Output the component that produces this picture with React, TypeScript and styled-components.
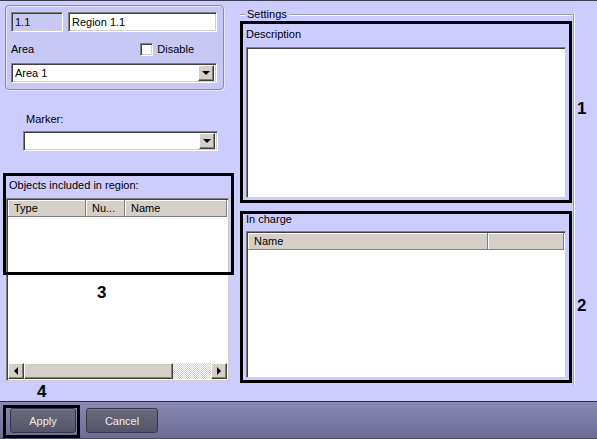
import styled, { createGlobalStyle } from "styled-components";

const GlobalStyle = createGlobalStyle`
  html, body {
    margin: 0;
    padding: 0;
    background: #ccccff;
  }
  * {
    box-sizing: border-box;
  }
`;

type Column = { title: string; width?: number };

const ListView = ({
  columns,
  scroll,
  className,
}: {
  columns: Column[];
  scroll?: boolean;
  className?: string;
}) => (
  <ListFrame className={className}>
    <HeaderRow>
      {columns.map((c) => (
        <HeaderCell key={c.title} $width={c.width}>
          {c.title}
        </HeaderCell>
      ))}
    </HeaderRow>
    <ListBody />
    {scroll && (
      <ScrollBar>
        <ScrollButton>
          <Arrow $dir="left" />
        </ScrollButton>
        <Thumb />
        <Track />
        <ScrollButton>
          <Arrow $dir="right" />
        </ScrollButton>
      </ScrollBar>
    )}
  </ListFrame>
);

const Select = ({ value, width }: { value: string; width: number }) => (
  <SelectBox $width={width}>
    <span>{value}</span>
    <DropButton>
      <Arrow $dir="down" />
    </DropButton>
  </SelectBox>
);

export default function App() {
  return (
    <>
      <GlobalStyle />
      <Page>
        <Main>
          <LeftColumn>
            <GroupBox>
              <FieldRow>
                <ReadOnlyField>1.1</ReadOnlyField>
                <TextField>Region 1.1</TextField>
              </FieldRow>
              <OptionRow>
                <Label>Area</Label>
                <CheckLabel>
                  <CheckBox />
                  Disable
                </CheckLabel>
              </OptionRow>
              <Select value="Area 1" width={206} />
            </GroupBox>

            <MarkerBlock>
              <MarkerLabel>Marker:</MarkerLabel>
              <Select value="" width={195} />
            </MarkerBlock>

            <ObjectsLabel>Objects included in region:</ObjectsLabel>
            <ObjectsList
              scroll
              columns={[
                { title: "Type", width: 78 },
                { title: "Nu...", width: 39 },
                { title: "Name" },
              ]}
            />
          </LeftColumn>

          <RightColumn>
            <Fieldset>
              <Legend>Settings</Legend>
              <Section $height={182}>
                <SectionLabel>Description</SectionLabel>
                <TextArea />
              </Section>
              <Section $height={172} $gap={8}>
                <SectionLabel $tight>In charge</SectionLabel>
                <ChargeList columns={[{ title: "Name", width: 240 }, { title: "" }]} />
              </Section>
            </Fieldset>
          </RightColumn>
        </Main>

        <BottomBar>
          <DarkButton $width={66}>Apply</DarkButton>
          <DarkButton $width={72}>Cancel</DarkButton>
        </BottomBar>

        <Callout style={{ left: 3, top: 172, width: 231, height: 102 }} />
        <Callout style={{ left: 3, top: 404, width: 77, height: 33 }} />
        <Number style={{ left: 577, top: 98 }}>1</Number>
        <Number style={{ left: 577, top: 295 }}>2</Number>
        <Number style={{ left: 97, top: 282 }}>3</Number>
        <Number style={{ left: 37, top: 381 }}>4</Number>
      </Page>
    </>
  );
}

const Page = styled.div`
  position: relative;
  width: 597px;
  height: 439px;
  overflow: hidden;
  display: flex;
  flex-direction: column;
  background: #ccccff;
  border-top: 1px solid #3c3c50;
  font-family: "Liberation Sans", Arial, sans-serif;
  font-size: 11px;
  color: #000;
`;

const Main = styled.div`
  flex: 1;
  display: flex;
`;

const LeftColumn = styled.div`
  width: 234px;
  display: flex;
  flex-direction: column;
`;

const GroupBox = styled.div`
  margin: 4px 0 0 5px;
  width: 219px;
  padding: 6px 6px 6px 5px;
  background: #c8c8f4;
  border: 1px solid #8a8aa6;
  border-radius: 4px;
  box-shadow: inset 1px 1px 0 #e6e6ff, 1px 1px 0 #e6e6ff;
`;

const FieldRow = styled.div`
  display: flex;
  gap: 5px;
`;

const sunken = `
  border: 1px solid;
  border-color: #808080 #ffffff #ffffff #808080;
  box-shadow: inset 1px 1px 0 #404040, inset -1px -1px 0 #d4d0c8;
`;

const ReadOnlyField = styled.div`
  width: 52px;
  height: 20px;
  padding: 3px 3px 0;
  line-height: 13px;
  background: #c8c8f4;
  ${sunken}
`;

const TextField = styled(ReadOnlyField)`
  width: 149px;
  background: #ffffff;
`;

const OptionRow = styled.div`
  height: 31px;
  padding-top: 4px;
  display: flex;
  align-items: center;
`;

const Label = styled.span`
  line-height: 13px;
`;

const CheckLabel = styled.label`
  margin-left: auto;
  margin-right: 23px;
  display: flex;
  align-items: center;
  gap: 4px;
  line-height: 13px;
`;

const CheckBox = styled.span`
  width: 13px;
  height: 13px;
  background: #ffffff;
  ${sunken}
`;

const SelectBox = styled.div<{ $width: number }>`
  width: ${({ $width }) => $width}px;
  height: 20px;
  display: flex;
  align-items: center;
  justify-content: space-between;
  padding: 2px 2px 2px 3px;
  background: #ffffff;
  line-height: 13px;
  ${sunken}
`;

const raised = `
  background: #d4d0c8;
  border: 1px solid;
  border-color: #ffffff #404040 #404040 #ffffff;
  box-shadow: inset -1px -1px 0 #808080;
`;

const DropButton = styled.span`
  width: 16px;
  height: 16px;
  display: flex;
  align-items: center;
  justify-content: center;
  ${raised}
`;

const Arrow = styled.span<{ $dir: "down" | "left" | "right" }>`
  width: 0;
  height: 0;
  border-style: solid;
  border-color: transparent;
  ${({ $dir }) =>
    $dir === "down"
      ? "border-width: 4px 4px 0 4px; border-top-color: #000;"
      : $dir === "left"
      ? "border-width: 4px 4px 4px 0; border-right-color: #000;"
      : "border-width: 4px 0 4px 4px; border-left-color: #000;"}
`;

const MarkerBlock = styled.div`
  margin-top: 23px;
  padding-left: 23px;
`;

const MarkerLabel = styled.div`
  margin: 0 0 5px 3px;
  line-height: 13px;
`;

const ObjectsLabel = styled.div`
  margin: 28px 0 0 9px;
  line-height: 13px;
`;

const ListFrame = styled.div`
  display: flex;
  flex-direction: column;
  background: #ffffff;
  padding: 1px;
  border: 1px solid;
  border-color: #808080 #d4d0c8 #d4d0c8 #808080;
  box-shadow: inset 1px 1px 0 #404040;
`;

const ObjectsList = styled(ListView)`
  margin: 6px 0 0 6px;
  width: 223px;
  height: 183px;
`;

const ChargeList = styled(ListView)`
  margin-top: 5px;
  width: 320px;
  flex: 1;
`;

const HeaderRow = styled.div`
  display: flex;
  height: 17px;
  background: #d4d0c8;
`;

const HeaderCell = styled.div<{ $width?: number }>`
  ${({ $width }) => ($width ? `width: ${$width}px; flex: none;` : "flex: 1;")}
  padding: 2px 0 0 6px;
  line-height: 13px;
  white-space: nowrap;
  overflow: hidden;
  border-right: 1px solid #808080;
  border-bottom: 1px solid #808080;
  box-shadow: inset 1px 1px 0 #ffffff;
`;

const ListBody = styled.div`
  flex: 1;
`;

const ScrollBar = styled.div`
  display: flex;
  height: 16px;
`;

const ScrollButton = styled.span`
  width: 16px;
  height: 16px;
  display: flex;
  align-items: center;
  justify-content: center;
  ${raised}
`;

const Thumb = styled.span`
  width: 149px;
  ${raised}
`;

const Track = styled.span`
  flex: 1;
  background-color: #ffffff;
  background-image: repeating-conic-gradient(#d4d0c8 0 25%, #ffffff 0 50%);
  background-size: 2px 2px;
`;

const RightColumn = styled.div`
  margin: 13px 0 0 6px;
  width: 334px;
`;

const Fieldset = styled.div`
  display: flex;
  flex-direction: column;
  padding-bottom: 2px;
  border-top: 1px solid #9c9cb4;
  border-right: 1px solid #9c9cb4;
  box-shadow: inset 0 1px 0 #ffffff, 1px 0 0 #ffffff;
`;

const Legend = styled.div`
  margin: -7px 0 0 5px;
  padding: 0 2px;
  align-self: flex-start;
  line-height: 13px;
  background: #ccccff;
`;

const Section = styled.div<{ $height: number; $gap?: number }>`
  width: 332px;
  height: ${({ $height }) => $height}px;
  margin-top: ${({ $gap }) => $gap ?? 0}px;
  display: flex;
  flex-direction: column;
  padding: 4px 3px 2px;
  border: 3px solid #000000;
`;

const SectionLabel = styled.div<{ $tight?: boolean }>`
  line-height: 13px;
  margin-top: ${({ $tight }) => ($tight ? "-5px" : "0")};
`;

const TextArea = styled.div`
  margin-top: 6px;
  width: 320px;
  flex: 1;
  background: #ffffff;
  border: 1px solid;
  border-color: #808080 #d4d0c8 #d4d0c8 #808080;
  box-shadow: inset 1px 1px 0 #404040;
`;

const BottomBar = styled.div`
  height: 38px;
  display: flex;
  gap: 10px;
  padding: 6px 0 0 10px;
  border-top: 1px solid #2c2c40;
  border-bottom: 1px solid #4a4a66;
  background: linear-gradient(#8a8ab0, #6c6c96);
`;

const DarkButton = styled.button<{ $width: number }>`
  width: ${({ $width }) => $width}px;
  height: 25px;
  padding: 0;
  font-family: "Liberation Sans", Arial, sans-serif;
  font-size: 11px;
  color: #ececf0;
  background: linear-gradient(#6a6a7c, #55556a);
  border: 1px solid #34344a;
  border-radius: 3px;
  box-shadow: inset 0 1px 0 #7c7c90;
`;

const Callout = styled.div`
  position: absolute;
  border: 3px solid #000000;
  pointer-events: none;
`;

const Number = styled.div`
  position: absolute;
  font-family: "Liberation Sans", Arial, sans-serif;
  font-weight: bold;
  font-size: 17px;
  line-height: 20px;
  color: #000000;
`;
